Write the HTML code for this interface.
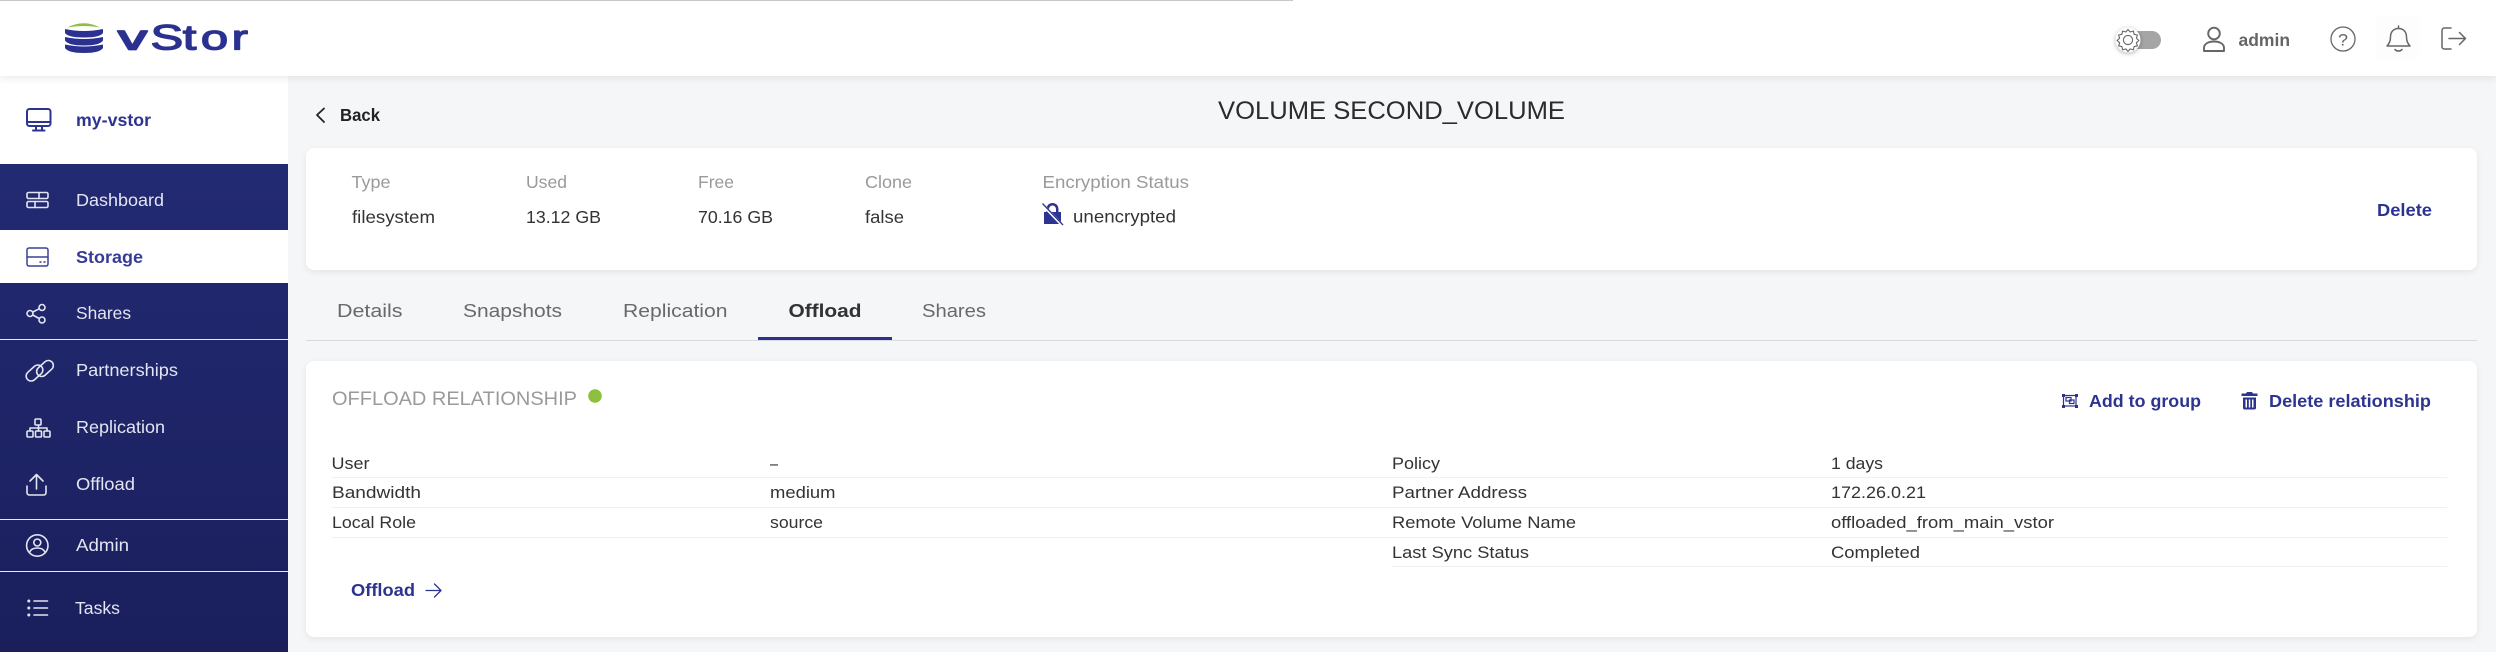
<!DOCTYPE html>
<html lang="en">
<head>
<meta charset="utf-8">
<title>vStor - Volume second_volume</title>
<style>
html,body{margin:0;padding:0;width:2496px;height:652px;overflow:hidden;background:#f5f6f8;font-family:"Liberation Sans",sans-serif}
.abs{position:absolute}
#topline{left:0;top:0;width:1293px;height:1px;background:#c8c8c8;z-index:5}
#header{left:0;top:0;width:2496px;height:76px;background:#fff;box-shadow:0 2px 8px rgba(0,0,0,.09);z-index:3}
#side{left:0;top:76px;width:288px;height:576px;background:#fff;z-index:2}
#nav{left:0;top:88px;width:288px;height:488px;background:linear-gradient(180deg,#222a72,#1a1f5c)}
#active{left:0;top:154px;width:288px;height:53px;background:#fff}
.sep{left:0;width:288px;height:1px;background:#e8e9f3}
.card{background:#fff;border-radius:8px;box-shadow:0 2px 7px rgba(0,0,0,.07);left:306px;width:2171px}
#tabline{left:306px;top:340px;width:2171px;height:1px;background:#d9dadd}
#tabactive{left:758px;top:337px;width:134px;height:3px;background:#2b3190}
.row{height:1px;background:#f1f1f3}
#bell{left:2376px;top:16px;width:44px;height:44px;background:#fdfdfd;border-radius:6px;z-index:4}
#ov{left:0;top:0;z-index:6}
text{font-family:"Liberation Sans",sans-serif;font-size:17.6px}
.n{fill:#e4e5f2}
.b{font-weight:700;fill:#2d3391}
.l{fill:#9a9a9a}
.v{fill:#333}
.t{fill:#696969;font-size:18.5px}
.r{fill:#333;font-size:17px}
.si{fill:none;stroke:#e4e5f2;stroke-width:1.6;stroke-linecap:round;stroke-linejoin:round}
.bi{fill:none;stroke:#2d3391;stroke-width:2;stroke-linecap:round;stroke-linejoin:round}
.gi{fill:none;stroke:#666;stroke-width:1.9;stroke-linecap:round;stroke-linejoin:round}
.logo{font-size:35px;fill:#2b3190;stroke:#2b3190;stroke-width:1.8;stroke-linejoin:round}
</style>
</head>
<body>
<div class="abs" id="header"></div>
<div class="abs" id="topline"></div>
<div class="abs" id="bell"></div>
<div class="abs" id="side">
  <div class="abs" id="nav"></div>
  <div class="abs" id="active"></div>
  <div class="abs sep" style="top:263px"></div>
  <div class="abs sep" style="top:443px"></div>
  <div class="abs sep" style="top:495px"></div>
</div>
<div class="abs card" style="top:148px;height:122px"></div>
<div class="abs" id="tabline"></div>
<div class="abs" id="tabactive"></div>
<div class="abs card" style="top:361px;height:276px"></div>
<div class="abs row" style="left:331px;top:477px;width:2116px"></div>
<div class="abs row" style="left:331px;top:507px;width:2116px"></div>
<div class="abs row" style="left:331px;top:537px;width:2116px"></div>
<div class="abs row" style="left:1392px;top:566px;width:1055px"></div>

<svg class="abs" id="ov" width="2496" height="652" viewBox="0 0 2496 652" xmlns="http://www.w3.org/2000/svg">
  <!-- logo -->
  <path d="M67 27.500Q84 19 100 27.500Q84 24.500 67 27.500Z" fill="#8dc03f"/>
  <path d="M65 29Q84 33 103 29V33Q100 37.500 84 37.500Q68 37.500 65 33Z" fill="#2b3190"/>
  <path d="M65 37Q84 41 103 37V40.500Q100 45.500 84 45.500Q68 45.500 65 40.500Z" fill="#2b3190"/>
  <path d="M65 44.500Q84 48.500 103 44.500V48Q100 53 84 53Q68 53 65 48Z" fill="#2b3190"/>
  <text class="logo" x="118" y="49.500" textLength="29" lengthAdjust="spacingAndGlyphs">v</text>
  <text class="logo" style="stroke-width:1.300" transform="scale(1.4 1)" x="107.500 130.500 143.500 165.500" y="49.500">Stor</text>

  <!-- header right -->
  <rect x="2120" y="31" width="41" height="18" rx="9" fill="#a5a5a5"/>
  <circle cx="2128" cy="40" r="12.500" fill="#fff" style="filter:drop-shadow(0 1px 2px rgba(0,0,0,.3))"/>
  <g fill="none" stroke="#666" stroke-width="1.100" stroke-linejoin="round">
    <path d="M2128 31l2.200 2.500 3.200-1 .7 3.300 3.300.7-1 3.200 2.500 2.300-2.500 2.200 1 3.200-3.300.7-.7 3.300-3.200-1-2.200 2.500-2.200-2.500-3.200 1-.7-3.300-3.300-.7 1-3.200-2.500-2.200 2.500-2.300-1-3.200 3.300-.7.7-3.300 3.200 1z" transform="translate(0 -1.500)"/>
    <circle cx="2128" cy="40" r="4.600"/>
  </g>
  <circle class="gi" cx="2214" cy="33.500" r="5.800"/>
  <path class="gi" stroke-width="2.200" d="M2204 51v-3c0-4 4-6.500 10-6.500s10 2.500 10 6.500v3z"/>
  <text x="2238.500" y="46" textLength="51.500" lengthAdjust="spacingAndGlyphs" style="font-weight:700;fill:#666">admin</text>
  <circle cx="2343" cy="39" r="12" fill="none" stroke="#666" stroke-width="1.300"/>
  <text x="2338" y="45.500" textLength="10" lengthAdjust="spacingAndGlyphs" style="fill:#666;font-size:17px">?</text>
  <path fill="none" stroke="#666" stroke-width="1.500" stroke-linejoin="round" stroke-linecap="round" d="M2398.500 26v2.500M2398.500 28.500c-5.500 0-8 4-8 8.500 0 4.500-1.500 7-3.500 9h23c-2-2-3.500-4.500-3.500-9 0-4.500-2.500-8.500-8-8.500zM2395 49.500c1.500 2 5.500 2 7 0"/>
  <path fill="none" stroke="#666" stroke-width="1.500" stroke-linecap="round" stroke-linejoin="round" d="M2451 28h-6.500c-1.500 0-2.500 1-2.500 2.500v16c0 1.500 1 2.500 2.500 2.500h6.500M2449 38.500h16.500M2459.500 32.500l6 6-6 6"/>

  <!-- sidebar -->
  <g class="bi"><rect x="27" y="109" width="23.500" height="17" rx="2.500"/><path d="M27 122h23.500M36 126v4M42 126v4M33 130.500h11.500"/></g>
  <text class="b" x="76" y="126" textLength="75" lengthAdjust="spacingAndGlyphs">my-vstor</text>

  <g class="si"><rect x="27" y="192.500" width="21" height="6" rx="1.500"/><rect x="27" y="201.500" width="21" height="6" rx="1.500"/><path d="M39 192.500v6M35 201.500v6"/></g>
  <text class="n" x="76" y="206" textLength="88" lengthAdjust="spacingAndGlyphs">Dashboard</text>

  <g class="bi" style="stroke:#3a4097;stroke-width:1.500"><rect x="27" y="248" width="21" height="18" rx="2"/><path d="M27 257h21M40 262h1M44 262h1"/></g>
  <text class="b" x="76" y="263" textLength="67" lengthAdjust="spacingAndGlyphs" style="fill:#353b96">Storage</text>

  <g class="si"><circle cx="42" cy="307.500" r="3"/><circle cx="30" cy="313.500" r="3"/><circle cx="42" cy="320" r="3"/><path d="M32.800 312l6.400-3.200M32.800 315l6.400 3.500"/></g>
  <text class="n" x="76" y="319" textLength="55" lengthAdjust="spacingAndGlyphs">Shares</text>

  <g class="si"><rect x="25" y="368" width="19" height="10" rx="5" transform="rotate(-42 34.500 373)"/><rect x="35.500" y="363.500" width="19" height="10" rx="5" transform="rotate(-42 45 368.500)"/></g>
  <text class="n" x="76" y="376" textLength="102" lengthAdjust="spacingAndGlyphs">Partnerships</text>

  <g class="si"><rect x="35" y="419" width="6" height="6" rx="1"/><rect x="27" y="431" width="6" height="6" rx="1"/><rect x="35.500" y="431" width="6" height="6" rx="1"/><rect x="44" y="431" width="6" height="6" rx="1"/><path d="M38.500 425v6M30 431v-3h17v3"/></g>
  <text class="n" x="76" y="433" textLength="89" lengthAdjust="spacingAndGlyphs">Replication</text>

  <g class="si"><path d="M27 486v6.500c0 1.500 1 2.500 2.500 2.500h14c1.500 0 2.500-1 2.500-2.500V486M36.500 489v-14.500M30 481l6.500-6.500 6.500 6.500"/></g>
  <text class="n" x="76" y="490" textLength="59" lengthAdjust="spacingAndGlyphs">Offload</text>

  <g class="si"><circle cx="37.300" cy="545.500" r="10.700"/><circle cx="37.300" cy="542.500" r="3.500"/><path d="M29.500 552.500c1-3 4-4.500 7.800-4.500s6.800 1.500 7.800 4.500"/></g>
  <text class="n" x="76" y="551" textLength="53" lengthAdjust="spacingAndGlyphs">Admin</text>

  <g class="si"><path d="M34 601h13.500M34 608h13.500M34 615h13.500"/></g>
  <circle cx="28.800" cy="601" r="1.500" fill="#e4e5f2"/><circle cx="28.800" cy="608" r="1.500" fill="#e4e5f2"/><circle cx="28.800" cy="615" r="1.500" fill="#e4e5f2"/>
  <text class="n" x="75" y="614" textLength="45" lengthAdjust="spacingAndGlyphs">Tasks</text>

  <!-- page head -->
  <path fill="none" stroke="#222" stroke-width="1.800" stroke-linecap="round" stroke-linejoin="round" d="M324 108.500l-7 6.500 7 7"/>
  <text x="340" y="121" textLength="40" lengthAdjust="spacingAndGlyphs" style="font-weight:700;fill:#222">Back</text>
  <text x="1218" y="119" textLength="347" lengthAdjust="spacingAndGlyphs" style="font-size:25px;fill:#2b2b2b">VOLUME SECOND_VOLUME</text>

  <!-- summary card -->
  <text class="l" x="351.500" y="188" textLength="39" lengthAdjust="spacingAndGlyphs">Type</text>
  <text class="l" x="526" y="188" textLength="41" lengthAdjust="spacingAndGlyphs">Used</text>
  <text class="l" x="698" y="188" textLength="36" lengthAdjust="spacingAndGlyphs">Free</text>
  <text class="l" x="865" y="188" textLength="47" lengthAdjust="spacingAndGlyphs">Clone</text>
  <text class="l" x="1042.500" y="188" textLength="146.500" lengthAdjust="spacingAndGlyphs">Encryption Status</text>
  <text class="v" x="352" y="223" textLength="83" lengthAdjust="spacingAndGlyphs">filesystem</text>
  <text class="v" x="526" y="223" textLength="75" lengthAdjust="spacingAndGlyphs">13.12 GB</text>
  <text class="v" x="698" y="223" textLength="75" lengthAdjust="spacingAndGlyphs">70.16 GB</text>
  <text class="v" x="865" y="223" textLength="39" lengthAdjust="spacingAndGlyphs">false</text>
  <text class="v" x="1073" y="222.500" textLength="103" lengthAdjust="spacingAndGlyphs">unencrypted</text>
  <path fill="#2d3391" d="M1044 212h2.500v-2.500c0-4 2.500-6.500 6-6.500s6 2.500 6 6.500v2.500h2.500v12h-17zM1049 212h7v-2.500c0-2.500-1.500-4-3.500-4s-3.500 1.500-3.500 4z" fill-rule="evenodd"/>
  <path fill="none" stroke="#fff" stroke-width="3" d="M1043 205l20 21"/>
  <path fill="none" stroke="#2d3391" stroke-width="1.300" d="M1042.500 203.500l20.500 21.500"/>
  <text class="b" x="2377" y="216" textLength="55" lengthAdjust="spacingAndGlyphs">Delete</text>

  <!-- tabs -->
  <text class="t" x="337" y="317" textLength="65.500" lengthAdjust="spacingAndGlyphs">Details</text>
  <text class="t" x="463" y="317" textLength="99" lengthAdjust="spacingAndGlyphs">Snapshots</text>
  <text class="t" x="623" y="317" textLength="104.500" lengthAdjust="spacingAndGlyphs">Replication</text>
  <text x="788.500" y="317" textLength="73" lengthAdjust="spacingAndGlyphs" style="font-size:18.500px;font-weight:700;fill:#333">Offload</text>
  <text class="t" x="922" y="317" textLength="64" lengthAdjust="spacingAndGlyphs">Shares</text>

  <!-- relationship card -->
  <text x="332" y="405" textLength="245" lengthAdjust="spacingAndGlyphs" style="font-size:19px;fill:#9a9a9a">OFFLOAD RELATIONSHIP</text>
  <circle cx="595" cy="396" r="6.800" fill="#8dc03f"/>
  <g fill="none" stroke="#2d3391" stroke-width="1.200"><rect x="2063.500" y="395.500" width="12.500" height="10.500"/><rect x="2066" y="397.500" width="5" height="3.500"/><rect x="2069.500" y="400" width="4.500" height="3.500"/></g>
  <g fill="#2d3391"><rect x="2062" y="394" width="3" height="3"/><rect x="2075" y="394" width="3" height="3"/><rect x="2062" y="405" width="3" height="3"/><rect x="2075" y="405" width="3" height="3"/></g>
  <text class="b" x="2089" y="407" textLength="112" lengthAdjust="spacingAndGlyphs">Add to group</text>
  <path fill="#2d3391" fill-rule="evenodd" d="M2247 392h5l1 1.500h4.500v2.500h-16v-2.500h4.500zM2243 397.500h13v10.500c0 .8-.7 1.500-1.500 1.500h-10c-.8 0-1.500-.7-1.500-1.500zM2245.500 399.500v8h1.500v-8zM2248.800 399.500v8h1.500v-8zM2252 399.500v8h1.500v-8z"/>
  <text class="b" x="2269" y="407" textLength="162" lengthAdjust="spacingAndGlyphs">Delete relationship</text>

  <text class="r" x="331.500" y="469" textLength="38" lengthAdjust="spacingAndGlyphs">User</text>
  <text class="r" x="332" y="498" textLength="89" lengthAdjust="spacingAndGlyphs">Bandwidth</text>
  <text class="r" x="332" y="528" textLength="84" lengthAdjust="spacingAndGlyphs">Local Role</text>
  <text class="r" x="770" y="469" textLength="8" lengthAdjust="spacingAndGlyphs">–</text>
  <text class="r" x="770" y="498" textLength="65.500" lengthAdjust="spacingAndGlyphs">medium</text>
  <text class="r" x="770" y="528" textLength="53" lengthAdjust="spacingAndGlyphs">source</text>
  <text class="r" x="1392" y="469" textLength="48" lengthAdjust="spacingAndGlyphs">Policy</text>
  <text class="r" x="1392" y="498" textLength="135" lengthAdjust="spacingAndGlyphs">Partner Address</text>
  <text class="r" x="1392" y="528" textLength="184" lengthAdjust="spacingAndGlyphs">Remote Volume Name</text>
  <text class="r" x="1392" y="558" textLength="137" lengthAdjust="spacingAndGlyphs">Last Sync Status</text>
  <text class="r" x="1831" y="469" textLength="52" lengthAdjust="spacingAndGlyphs">1 days</text>
  <text class="r" x="1831" y="498" textLength="95" lengthAdjust="spacingAndGlyphs">172.26.0.21</text>
  <text class="r" x="1831" y="528" textLength="223" lengthAdjust="spacingAndGlyphs">offloaded_from_main_vstor</text>
  <text class="r" x="1831" y="558" textLength="89" lengthAdjust="spacingAndGlyphs">Completed</text>
  <text class="b" x="351" y="596" textLength="64" lengthAdjust="spacingAndGlyphs">Offload</text>
  <path fill="none" stroke="#2d3391" stroke-width="1.300" stroke-linecap="round" stroke-linejoin="round" d="M426 590.500h14.500M434.500 584l6.500 6.500-6.500 6.500"/>
</svg>
</body>
</html>
